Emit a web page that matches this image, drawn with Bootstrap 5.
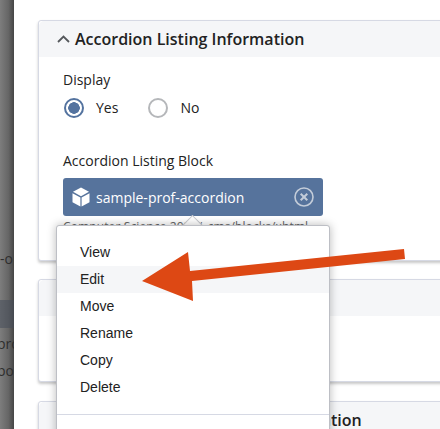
<!DOCTYPE html>
<html lang="en">
<head>
<meta charset="utf-8">
<title>Accordion Listing Information</title>
<link href="https://cdn.jsdelivr.net/npm/bootstrap@5.3.0/dist/css/bootstrap.min.css" rel="stylesheet">
<style>
html,body{height:429px;overflow:hidden}
body{font-family:"Open Sans",sans-serif;font-size:14px;color:#222;background:#fff}
.page-frame{position:relative;height:429px;width:440px;overflow:hidden}
.side-strip{width:14px;flex:none;overflow:hidden;background:linear-gradient(90deg,#7d7d7d 0,#666 60%,#454545 100%);color:#2e2e2e;font-size:14px;white-space:nowrap;padding-top:245px}
.side-line{height:27px;line-height:27px}
.side-cut{text-indent:-3px}
.side-active{height:28px;margin:28px 0 2px;background:rgba(70,76,90,.55)}
.work-area{width:426px;flex:none;padding:20px 0 0 24px;overflow:hidden}
.info-card{width:440px;flex:none;border:1px solid #d6d9e4;border-radius:3px;box-shadow:0 2px 3px rgba(0,0,0,.22);margin-bottom:19px;background:#fff}
.info-head{height:36px;background:#f5f6f8;border:0;padding:0 0 0 18px;font-size:16px;font-weight:600;color:#222;border-radius:2px 2px 0 0}
.info-head svg{width:13px;height:8px;margin-right:5px}
.info-body{padding:14px 0 0 24px}
.card-one{height:241px;margin-bottom:18px}
.card-two{height:103px}
.card-three{height:120px}
.field-name{line-height:18px;height:18px}
.radio-row{margin-top:9px;height:20px;gap:29px;line-height:20px}
.radio-row .form-check{margin:0;padding:0;min-height:0;gap:12px;display:flex;align-items:center}
.radio-row .form-check-input{width:20px;height:20px;margin:0 0 0 1px;float:none;background-color:#fff;border:2px solid #b5b7ba;box-shadow:none}
.radio-row .form-check-input:checked{background-color:#fff;border-color:#54739f;background-image:radial-gradient(circle,#54739f 0,#54739f 5.5px,transparent 6px)}
.block-label{margin-top:34px}
.block-chip{width:260px;height:38px;margin-top:8px;background:#56739c;color:#fff;border-radius:3px;padding:0 9px;font-weight:400;font-size:14px;gap:6px}
.block-chip .chip-cube{width:18px;height:20px;flex:none}
.block-chip .chip-x{width:20px;height:20px;flex:none;margin-left:auto}
.block-path{font-size:12px;color:#666;margin-top:3px;line-height:16px;letter-spacing:.12px}
.ctx-menu.dropdown-menu{display:block;position:absolute;left:56px;top:225px;width:274px;height:230px;margin:0;padding:13px 0 0;border:1px solid #bdbfc5;border-radius:3px;box-shadow:0 0 10px rgba(0,0,0,.28);font-family:"Liberation Sans",Arial,sans-serif;font-size:14px;z-index:3}
.ctx-menu .dropdown-item{height:27px;line-height:27px;padding:0 0 0 23px;color:#222}
.ctx-menu .dropdown-item.is-hover{background:#f5f6f8}
.ctx-menu .dropdown-divider{margin:13px 0 0;border-color:#d6d9e4;opacity:1}
.ctx-caret{position:absolute;left:184.5px;top:218px;width:15px;height:15px;background:#fff;border:1px solid #c4c6cb;border-right:0;border-bottom:0;transform:rotate(45deg);z-index:2}
.ctx-caret-cover{position:absolute;left:180px;top:226px;width:26px;height:8px;background:#fff;z-index:4}
.red-arrow{position:absolute;left:0;top:0;width:440px;height:429px;z-index:5;pointer-events:none}
</style>
</head>
<body>
<div class="page-frame d-flex">
  <aside class="side-strip">
    <div class="side-line">-options</div>
    <div class="side-active"></div>
    <div class="side-line side-cut">proper</div>
    <div class="side-line side-cut">book</div>
  </aside>
  <main class="work-area d-flex flex-column">
    <section class="card info-card card-one">
      <div class="card-header info-head d-flex align-items-center">
        <svg viewBox="0 0 13 8" fill="none" stroke="#55585c" stroke-width="1.8"><path d="M1 7l5.5-5.5L12 7"/></svg>
        <span>Accordion Listing Information</span>
      </div>
      <div class="card-body info-body">
        <div class="field-name">Display</div>
        <div class="radio-row d-flex">
          <label class="form-check"><input class="form-check-input" type="radio" name="disp" checked><span>Yes</span></label>
          <label class="form-check"><input class="form-check-input" type="radio" name="disp"><span>No</span></label>
        </div>
        <div class="field-name block-label">Accordion Listing Block</div>
        <div class="block-chip d-flex align-items-center">
          <svg class="chip-cube" viewBox="0 0 18 20"><path fill="#fff" d="M9 .5l8 4.3-8 4.4-8-4.4z"/><path fill="#fff" d="M.5 6.2l7.9 4.4v9L.5 15.2zM17.5 6.2l-7.9 4.4v9l7.9-4.4z"/></svg>
          <span>sample-prof-accordion</span>
          <svg class="chip-x" viewBox="0 0 20 20" fill="none" stroke="#c3ccd9" stroke-width="1.6"><circle cx="10" cy="10" r="9"/><path stroke-width="2" d="M6.7 6.7l6.6 6.6M13.3 6.7l-6.6 6.6"/></svg>
        </div>
        <div class="block-path">Computer Science 2024/_cms/blocks/xhtml</div>
      </div>
    </section>
    <section class="card info-card card-two">
      <div class="card-header info-head"></div>
    </section>
    <section class="card info-card card-three">
      <div class="card-header info-head d-flex align-items-center">
        <svg viewBox="0 0 13 8" fill="none" stroke="#55585c" stroke-width="1.8"><path d="M1 7l5.5-5.5L12 7"/></svg>
        <span>Accordion Content Block Information</span>
      </div>
    </section>
  </main>
  <div class="ctx-caret"></div>
  <div class="dropdown-menu ctx-menu">
    <a class="dropdown-item" href="#">View</a>
    <a class="dropdown-item is-hover" href="#">Edit</a>
    <a class="dropdown-item" href="#">Move</a>
    <a class="dropdown-item" href="#">Rename</a>
    <a class="dropdown-item" href="#">Copy</a>
    <a class="dropdown-item" href="#">Delete</a>
    <hr class="dropdown-divider">
  </div>
  <div class="ctx-caret-cover"></div>
  <svg class="red-arrow" viewBox="0 0 440 429"><polygon fill="#dd4814" points="142,281 188,252 190,271 404,249 405,259 192,281 193,301"/></svg>
</div>
<script src="https://cdn.jsdelivr.net/npm/bootstrap@5.3.0/dist/js/bootstrap.bundle.min.js"></script>
</body>
</html>
